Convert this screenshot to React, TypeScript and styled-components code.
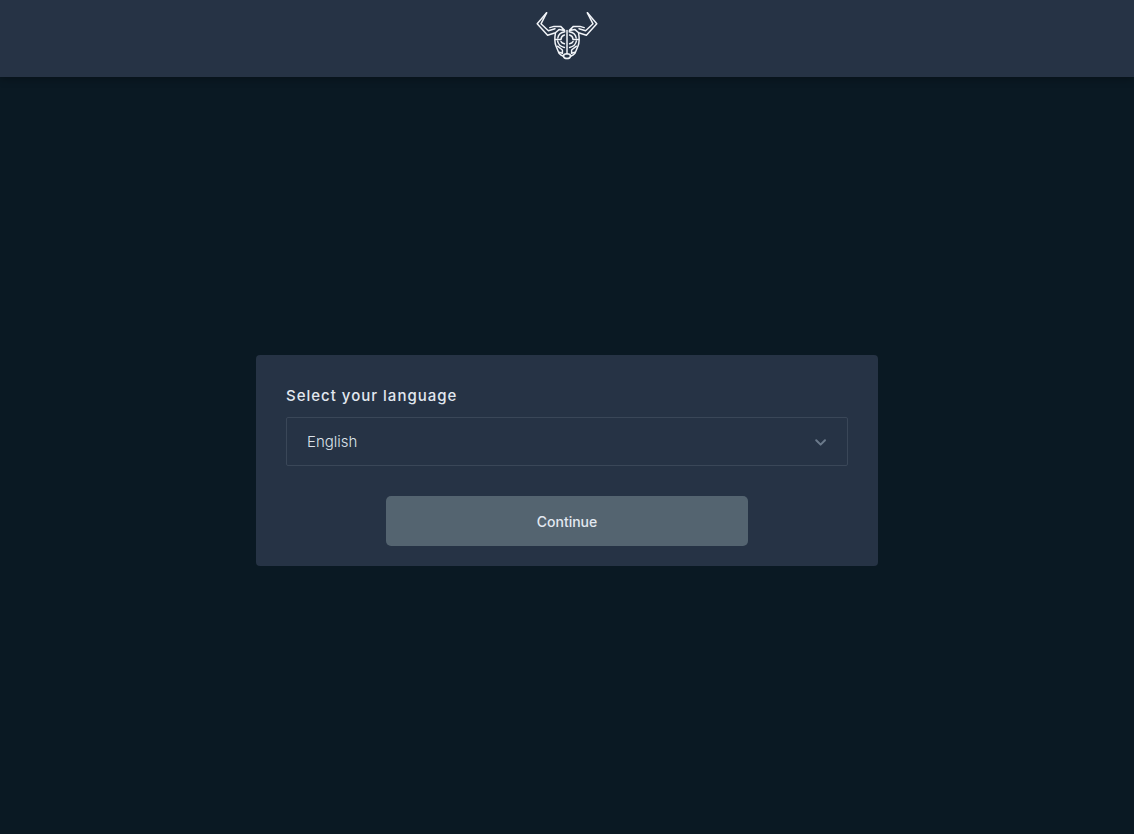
import React from "react";
import styled, { createGlobalStyle } from "styled-components";

const GlobalStyle = createGlobalStyle`
  *, *::before, *::after { box-sizing: border-box; }
  body {
    margin: 0;
    background: #0a1923;
    color: #e2e8f0;
    font-family: Inter, "Liberation Sans", sans-serif;
  }
`;

const Page = styled.div`
  display: flex;
  flex-direction: column;
  min-height: 100vh;
`;

const Header = styled.header`
  display: flex;
  justify-content: center;
  padding: 10px 0 15px;
  background: #263345;
  box-shadow: 0 2px 8px rgba(0, 0, 0, 0.3);
`;

const Logo = styled.svg`
  display: block;
  width: 62px;
  height: 52px;
  fill: none;
  stroke: #f1f4f8;
  stroke-width: 1.5;
  stroke-linejoin: round;
  stroke-linecap: round;
`;

const Main = styled.main`
  flex: 1;
  display: flex;
  align-items: center;
  justify-content: center;
  padding: 30px 20px 20px;
`;

const Card = styled.form`
  display: flex;
  flex-direction: column;
  width: 100%;
  max-width: 622px;
  padding: 30px 30px 20px;
  border-radius: 4px;
  background: #263345;
`;

const Label = styled.label`
  margin-bottom: 10px;
  font-size: 15px;
  font-weight: 500;
  line-height: 22px;
  letter-spacing: 1px;
`;

const SelectField = styled.div`
  display: grid;
  align-items: center;
  margin-bottom: 30px;
`;

const Select = styled.select`
  grid-area: 1 / 1;
  width: 100%;
  height: 49px;
  padding: 0 50px 0 20px;
  border: 1px solid #3a4758;
  border-radius: 2px;
  appearance: none;
  background: transparent;
  color: #dbe2ea;
  font-family: inherit;
  font-size: 15px;
  font-weight: 300;
`;

const Chevron = styled.svg`
  grid-area: 1 / 1;
  justify-self: end;
  width: 14px;
  height: 10px;
  margin-right: 20px;
  fill: none;
  stroke: #6b7a8b;
  stroke-width: 2;
  stroke-linecap: round;
  stroke-linejoin: round;
  pointer-events: none;
`;

const Button = styled.button`
  height: 50px;
  margin: 0 100px;
  border: 0;
  border-radius: 5px;
  background: #546470;
  color: #e2e8f0;
  font-family: inherit;
  font-size: 14px;
  font-weight: 500;
  cursor: pointer;
`;

const BullHalf = () => (
  <>
    <path d="M10.6 2.8 L1.2 13.8 L11.6 25.2 L19.4 22.8 L23 19.6 L28.6 20.4 L24.6 16.4 H18 L13.8 17.6" />
    <path d="M10.6 2.8 L5 13.8 L12.4 20.8 L19 18.8" />
    <path d="M19.4 23.4 Q18 31 20 36 L23 43.2 Q25 45.4 27.4 46.2" />
    <path d="M28.8 21.8 Q22.6 22.8 21.8 28 M21.6 31 Q22.4 36 28.4 37.4" />
    <path d="M28.4 25 Q25.2 26 25 29.4 H19.6 M28.4 33.8 Q25.6 33 25 31.4" />
    <path d="M21.6 36.2 L26.4 40 V43.4 L23.4 42.2" />
    <path d="M31 43.8 Q27.4 43.8 27.4 46.2 Q28 48.6 31 48.6" />
  </>
);

export default function App() {
  return (
    <>
      <GlobalStyle />
      <Page>
        <Header>
          <Logo viewBox="0 0 62 52" role="img" aria-label="Bull logo">
            <BullHalf />
            <g transform="translate(62 0) scale(-1 1)">
              <BullHalf />
            </g>
            <path d="M31 20.4 V43.6" />
          </Logo>
        </Header>
        <Main>
          <Card onSubmit={(event) => event.preventDefault()}>
            <Label htmlFor="language">Select your language</Label>
            <SelectField>
              <Select id="language" name="language" defaultValue="en">
                <option value="en">English</option>
              </Select>
              <Chevron viewBox="0 0 14 10" aria-hidden="true">
                <path d="M2.2 3.2 L6.6 7.6 L11 3.2" />
              </Chevron>
            </SelectField>
            <Button type="submit">Continue</Button>
          </Card>
        </Main>
      </Page>
    </>
  );
}
